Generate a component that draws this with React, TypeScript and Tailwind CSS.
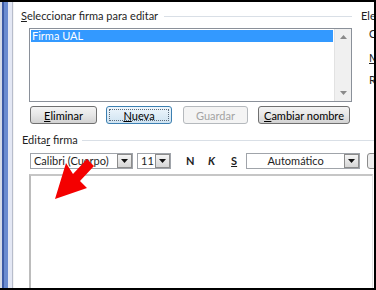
import React from "react";

function Drop({ w = 15 }: { w?: number }) {
  return (
    <div
      className="h-full flex items-center justify-center border border-[#8c8c8c] bg-gradient-to-b from-[#f4f4f4] to-[#d6d6d6] shrink-0"
      style={{ width: w }}
    >
      <svg width="7" height="4" viewBox="0 0 7 4">
        <path d="M0 0h7L3.5 4z" fill="#111" />
      </svg>
    </div>
  );
}

function Btn({
  children,
  w,
  kind = "normal",
}: {
  children: React.ReactNode;
  w: number;
  kind?: "normal" | "default" | "disabled";
}) {
  if (kind === "default") {
    return (
      <div
        className="h-full rounded-[3px] border border-[#3c7fb1] bg-gradient-to-b from-[#eef6fc] to-[#cfe3f1] p-[2px] shrink-0"
        style={{ width: w }}
      >
        <div className="w-full h-full border border-dotted border-[#5a6a7a] flex items-center justify-center text-[11px] text-black leading-none">
          {children}
        </div>
      </div>
    );
  }
  if (kind === "disabled") {
    return (
      <div
        className="h-full rounded-[3px] border border-[#b5b9bd] bg-[#f4f4f4] flex items-center justify-center text-[11px] text-[#a3a3a3] leading-none shrink-0"
        style={{ width: w }}
      >
        {children}
      </div>
    );
  }
  return (
    <div
      className="h-full rounded-[3px] border border-[#707070] bg-gradient-to-b from-[#f4f4f4] via-[#e6e6e6] to-[#d2d2d2] flex items-center justify-center text-[11px] text-black leading-none shrink-0"
      style={{ width: w }}
    >
      {children}
    </div>
  );
}

export default function App() {
  return (
    <div className="w-[376px] h-[290px] box-border border-y-2 border-r-2 border-black bg-white flex relative overflow-hidden font-['Lato','Noto_Sans',sans-serif] text-[11px] text-[#1e1e1e]">
      {/* window frame */}
      <div className="w-[14px] h-full flex shrink-0">
        <div className="w-[2px] bg-[#d6dbe8]" />
        <div className="w-[2px] bg-[#3d5ba6]" />
        <div className="w-[4px] bg-[#6b8bd0]" />
        <div className="w-[4px] bg-[#e3e7f4]" />
        <div className="w-[1px] bg-[#b7bccb]" />
        <div className="w-[1px] bg-[#f4f4f4]" />
      </div>

      <div className="flex-1 flex flex-col min-w-0">
        {/* upper */}
        <div className="flex">
          <div className="w-[347px] shrink-0 flex flex-col">
            <div className="mt-[7px] h-[14px] flex items-center pl-[7px] pr-[9px]">
              <span className="leading-[14px] whitespace-nowrap">
                <span className="underline">S</span>eleccionar firma para editar
              </span>
              <div className="flex-1 h-px bg-[#d9dfe6] ml-[6px]" />
            </div>
            <div className="mt-[5px] ml-[15px] w-[323px] h-[74px] border border-[#8a9099] flex">
              <div className="flex-1 p-[1px]">
                <div className="h-[12px] bg-[#3399ff] text-white leading-[12px] pl-[1px]">Firma UAL</div>
              </div>
              <div className="w-[17px] h-full bg-[#f0f0f0] border-l border-[#e2e2e2] flex flex-col items-center justify-between py-[6px]">
                <svg width="7" height="4" viewBox="0 0 7 4">
                  <path d="M0 4h7L3.5 0z" fill="#8a8a8a" />
                </svg>
                <svg width="7" height="4" viewBox="0 0 7 4">
                  <path d="M0 0h7L3.5 4z" fill="#8a8a8a" />
                </svg>
              </div>
            </div>
            <div className="mt-[4px] ml-[16px] h-[18px] flex">
              <Btn w={67}>
                <span className="underline">E</span>liminar
              </Btn>
              <div className="w-[9px]" />
              <Btn w={66} kind="default">
                <span className="underline">N</span>ueva
              </Btn>
              <div className="w-[11px]" />
              <Btn w={65} kind="disabled">
                Guardar
              </Btn>
              <div className="w-[10px]" />
              <Btn w={92}>
                <span className="underline">C</span>ambiar nombre
              </Btn>
            </div>
          </div>
          <div className="flex-1 min-w-0 overflow-hidden flex flex-col whitespace-nowrap leading-[14px]">
            <div className="mt-[7px]">Ele</div>
            <div className="mt-[4px] pl-[8px]">C</div>
            <div className="mt-[10px] pl-[8px]">
              <span className="underline">M</span>
            </div>
            <div className="mt-[8px] pl-[8px]">R</div>
          </div>
        </div>

        {/* lower */}
        <div className="mt-[9px] h-[14px] flex items-center pl-[8px]">
          <span className="leading-[14px] whitespace-nowrap">
            Edita<span className="underline">r</span> firma
          </span>
          <div className="flex-1 h-px bg-[#d9dfe6] ml-[4px]" />
        </div>

        <div className="mt-[6px] h-[16px] flex pl-[16px] whitespace-nowrap overflow-hidden">
          <div className="w-[103px] h-full border border-[#a0a4aa] flex shrink-0">
            <div className="flex-1 pl-[3px] leading-[14px]">Calibri (Cuerpo)</div>
            <Drop w={15} />
          </div>
          <div className="w-[4px] shrink-0" />
          <div className="w-[34px] h-full border border-[#a0a4aa] flex shrink-0">
            <div className="flex-1 pl-[3px] leading-[14px]">11</div>
            <Drop w={15} />
          </div>
          <div className="w-[15px] shrink-0" />
          <div className="w-[8px] font-bold leading-[16px] text-center">N</div>
          <div className="w-[14px] shrink-0" />
          <div className="w-[8px] font-bold italic leading-[16px] text-center">K</div>
          <div className="w-[16px] shrink-0" />
          <div className="w-[8px] font-bold underline leading-[16px] text-center">S</div>
          <div className="w-[9px] shrink-0" />
          <div className="w-[114px] h-full border border-[#a0a4aa] flex shrink-0">
            <div className="flex-1 text-center leading-[14px]">Automático</div>
            <Drop w={15} />
          </div>
          <div className="w-[7px] shrink-0" />
          <div className="w-[20px] h-full border border-[#8c8c8c] rounded-[3px] bg-[#eeeeee] shrink-0" />
        </div>

        <div className="mt-[5px] ml-[15px] mr-[1px] flex-1 border-t-2 border-l-2 border-r border-t-[#c6c6c6] border-l-[#bcbcbc] border-r-[#e2e2e2] bg-white" />
      </div>

      {/* red arrow */}
      <svg
        className="absolute left-0 top-0 pointer-events-none"
        width="376"
        height="290"
        viewBox="0 0 376 290"
      >
        <polygon
          points="55,197 87,186 80,179 94,164 87,157 73,172 66,161"
          fill="#f40000"
        />
      </svg>
    </div>
  );
}
